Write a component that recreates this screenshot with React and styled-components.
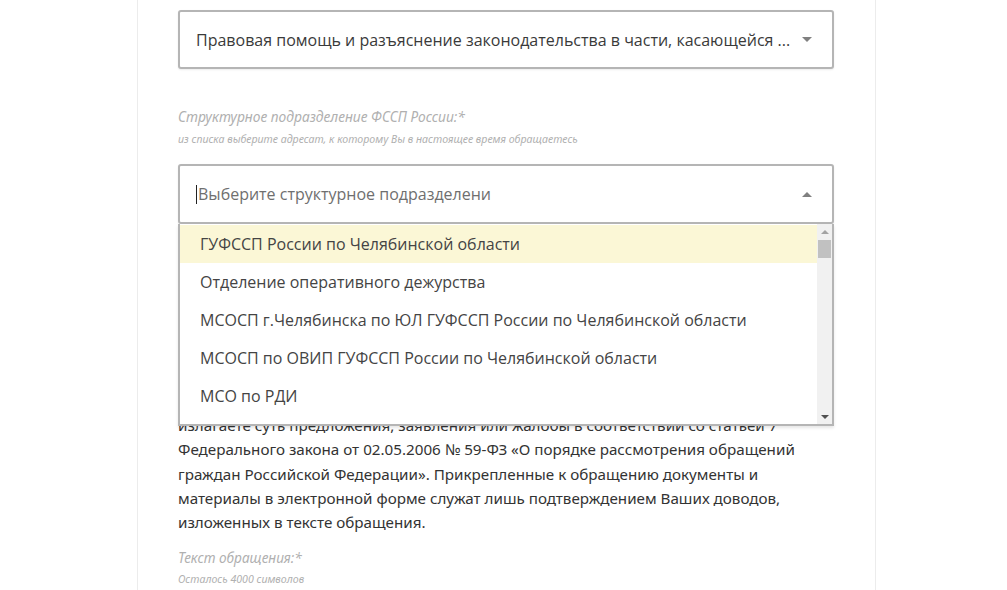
import React from 'react'
import styled, { createGlobalStyle } from 'styled-components'

const GlobalStyle = createGlobalStyle`
  html, body {
    margin: 0;
    padding: 0;
    background: #fff;
    overflow: hidden;
  }
`

const Page = styled.div`
  width: 1007px;
  height: 590px;
  overflow: hidden;
`

const Card = styled.div`
  width: 656px;
  margin-left: 137px;
  padding: 10px 41px 0 40px;
  height: 600px;
  border-left: 1px solid #ececec;
  border-right: 1px solid #ececec;
  font-family: 'Open Sans', 'Noto Sans', sans-serif;
`

const Select = styled.div`
  position: relative;
  box-sizing: border-box;
  height: ${(p) => p.height}px;
  display: flex;
  align-items: center;
  padding: 0 20px 0 16px;
  border: 2px solid #b5b5b5;
  border-radius: 3px;
  background: #fff;
  box-shadow: 0 1px 2px rgba(0, 0, 0, 0.08);
`

const SelectText = styled.div`
  flex: 1;
  font-size: 16px;
  color: ${(p) => (p.placeholder ? '#6f6f6f' : '#3a3a3a')};
  white-space: nowrap;
  display: flex;
  align-items: center;
`

const Caret = styled.span`
  width: 1px;
  height: 19px;
  background: #222;
  margin-right: 1px;
`

const Arrow = styled.span`
  width: 0;
  height: 0;
  border-left: 5px solid transparent;
  border-right: 5px solid transparent;
  ${(p) => (p.up ? 'border-bottom: 5px solid #808080;' : 'border-top: 5px solid #808080;')}
`

const Label = styled.div`
  margin-top: ${(p) => p.top}px;
  font-family: 'Noto Sans', sans-serif;
  font-style: italic;
  font-size: ${(p) => p.size || 13.8}px;
  line-height: 16px;
  color: #b0b0b0;
`

const Hint = styled.div`
  margin-top: ${(p) => p.top}px;
  font-family: 'Noto Sans', sans-serif;
  font-style: italic;
  font-size: 10.6px;
  line-height: 14px;
  color: #b0b0b0;
`

const SelectWrap = styled.div`
  position: relative;
  margin-top: 18px;
`

const Dropdown = styled.div`
  position: absolute;
  top: 100%;
  left: 0;
  right: 0;
  height: 202px;
  box-sizing: border-box;
  border: 2px solid #b5b5b5;
  border-top: none;
  background: #fff;
  display: flex;
  overflow: hidden;
  z-index: 2;
  box-shadow: 0 2px 3px rgba(0, 0, 0, 0.1);
`

const Options = styled.ul`
  flex: 1;
  list-style: none;
  margin: 0;
  padding: 1px 0 0;
`

const Option = styled.li`
  height: 38px;
  display: flex;
  align-items: center;
  padding-left: 20px;
  font-size: 16px;
  color: #444;
  white-space: nowrap;
  background: ${(p) => (p.active ? '#fbf7d6' : 'transparent')};
`

const Scrollbar = styled.div`
  width: 15px;
  background: #f1f1f1;
  display: flex;
  flex-direction: column;
  align-items: center;
`

const ScrollButton = styled.div`
  height: 15px;
  display: flex;
  align-items: center;
  justify-content: center;
  & > span {
    width: 0;
    height: 0;
    border-left: 4px solid transparent;
    border-right: 4px solid transparent;
    ${(p) => (p.up ? 'border-bottom: 4px solid #a3a3a3;' : 'border-top: 4px solid #505050;')}
  }
`

const Track = styled.div`
  flex: 1;
  width: 100%;
  padding: 0 1px;
  box-sizing: border-box;
`

const Thumb = styled.div`
  margin-top: 1px;
  height: 18px;
  background: #c1c1c1;
`

const Paragraph = styled.p`
  margin: 189px 0 0;
  font-family: 'Noto Sans', sans-serif;
  font-size: 15.2px;
  line-height: 24.3px;
  color: #333;
`

const Line = styled.span`
  display: block;
  white-space: nowrap;
`

const options = [
  'ГУФССП России по Челябинской области',
  'Отделение оперативного дежурства',
  'МСОСП г.Челябинска по ЮЛ ГУФССП России по Челябинской области',
  'МСОСП по ОВИП ГУФССП России по Челябинской области',
  'МСО по РДИ',
  'Ашинский ГОСП',
]

const lines = [
  'излагаете суть предложения, заявления или жалобы в соответствии со статьей 7',
  'Федерального закона от 02.05.2006 № 59-ФЗ «О порядке рассмотрения обращений',
  'граждан Российской Федерации». Прикрепленные к обращению документы и',
  'материалы в электронной форме служат лишь подтверждением Ваших доводов,',
  'изложенных в тексте обращения.',
]

const App = () => {
  return (
    <Page>
      <GlobalStyle />
      <Card>
        <Select height={59}>
          <SelectText>Правовая помощь и разъяснение законодательства в части, касающейся ...</SelectText>
          <Arrow />
        </Select>

        <Label top={40}>Структурное подразделение ФССП России:*</Label>
        <Hint top={7}>из списка выберите адресат, к которому Вы в настоящее время обращаетесь</Hint>

        <SelectWrap>
          <Select height={60}>
            <SelectText placeholder="true">
              <Caret />
              Выберите структурное подразделени
            </SelectText>
            <Arrow up />
          </Select>
          <Dropdown>
            <Options>
              {options.map((o, i) => (
                <Option key={o} active={i === 0}>
                  {o}
                </Option>
              ))}
            </Options>
            <Scrollbar>
              <ScrollButton up>
                <span />
              </ScrollButton>
              <Track>
                <Thumb />
              </Track>
              <ScrollButton>
                <span />
              </ScrollButton>
            </Scrollbar>
          </Dropdown>
        </SelectWrap>

        <Paragraph>
          {lines.map((l) => (
            <Line key={l}>{l}</Line>
          ))}
        </Paragraph>

        <Label top={16} size={13.6}>Текст обращения:*</Label>
        <Hint top={6}>Осталось 4000 символов</Hint>
      </Card>
    </Page>
  )
}

export default App
